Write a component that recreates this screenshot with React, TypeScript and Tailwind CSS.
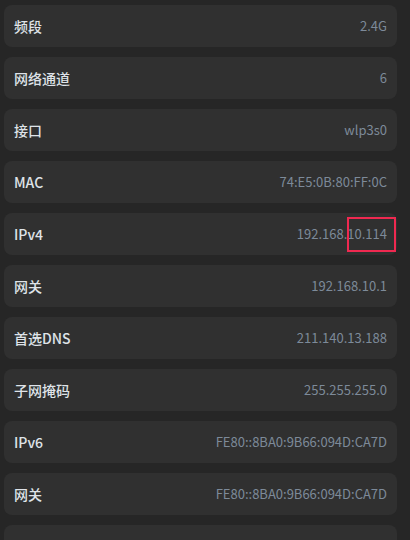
const rows: [string, string][] = [
  ["频段", "2.4G"],
  ["网络通道", "6"],
  ["接口", "wlp3s0"],
  ["MAC", "74:E5:0B:80:FF:0C"],
  ["IPv4", "192.168.10.114"],
  ["网关", "192.168.10.1"],
  ["首选DNS", "211.140.13.188"],
  ["子网掩码", "255.255.255.0"],
  ["IPv6", "FE80::8BA0:9B66:094D:CA7D"],
  ["网关", "FE80::8BA0:9B66:094D:CA7D"],
  ["状态", ""],
];

export default function App() {
  return (
    <div
      className="h-[540px] overflow-hidden bg-[#262626] pl-1 pr-[13px] pt-[5px]"
      style={{ fontFamily: '"Noto Sans CJK SC", "Noto Sans", sans-serif' }}
    >
      <div className="flex flex-col gap-[10px]">
        {rows.map(([label, value], i) => (
          <div
            key={i}
            className="relative flex h-[42px] items-center justify-between rounded-lg bg-[#303030] pl-[10px] pr-[10px]"
          >
            <span className="text-[14px] font-medium text-[#dfe3e8]">{label}</span>
            <span className="text-[13px] text-[#7d8a99]">{value}</span>
            {label === "IPv4" && (
              <div className="absolute right-[1px] top-[4px] h-[35px] w-[49px] border-2 border-[#ef2950]" />
            )}
          </div>
        ))}
      </div>
    </div>
  );
}
